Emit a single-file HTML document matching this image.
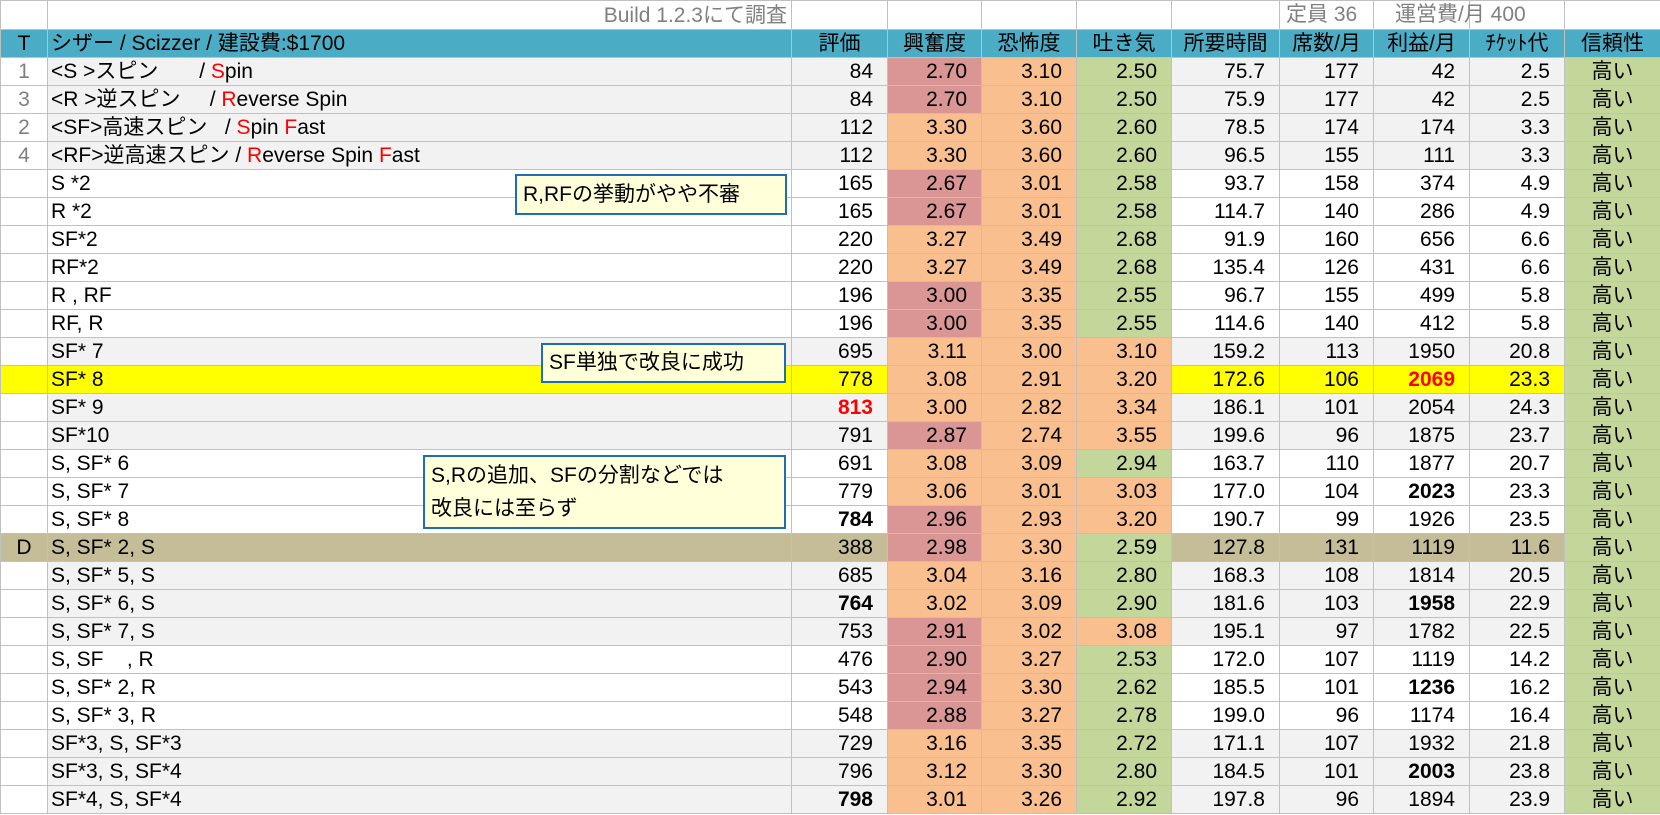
<!DOCTYPE html>
<html><head><meta charset="utf-8">
<style>
html,body{margin:0;padding:0;background:#fff;width:1660px;height:815px;overflow:hidden}
body{font-family:"Liberation Sans Narrow","Liberation Sans","Noto Sans CJK JP",sans-serif;font-size:21px;color:#000;position:relative}
table{border-collapse:collapse;table-layout:fixed;position:absolute;left:0;top:0;width:1660px}
td{border:1px solid #c0c0c0;height:27px;padding:0 14px 0 0;text-align:right;white-space:nowrap;overflow:hidden;line-height:27px;background:#fff}
tr.top td{height:28px;color:#808080}
tr.hd td{background:#4bacc6;text-align:center;padding:0}
td.n{text-align:center;color:#808080;padding:0}
td.nm{text-align:left;padding:0 0 0 3px}
tr.g td{background:#f2f2f2}
tr.g td.n{background:#fff}
tr td.gn{background:#f2f2f2}
tr.y td{background:#ffff00}
tr.d td{background:#c4bd97}
tr.d td.n{color:#000}
tr td.r{background:#da9694}
tr td.o{background:#fabf8f}
tr td.gr{background:#c4d79b}
tr td.h{background:#c4d79b;text-align:center;padding:0}
.red{color:#ff0000}
b{font-weight:bold}
.box{position:absolute;background:#ffffd9;border:2px solid #1f6fb0;font-size:21px;line-height:32px;padding:0 6px;box-sizing:border-box}
.tl{position:absolute;top:0;line-height:29px;color:#808080;white-space:nowrap}
</style></head><body>
<table>
<colgroup><col style="width:47px"><col style="width:744px"><col style="width:96px"><col style="width:94px"><col style="width:95px"><col style="width:95px"><col style="width:108px"><col style="width:94px"><col style="width:96px"><col style="width:95px"><col style="width:96px"></colgroup>
<tr class="top"><td></td><td style="padding-right:4px">Build 1.2.3にて調査</td><td></td><td></td><td></td><td></td><td></td><td></td><td></td><td></td><td></td></tr>
<tr class="hd"><td>T</td><td style="text-align:left;padding-left:3px">シザー / Scizzer / 建設費:$1700</td><td>評価</td><td>興奮度</td><td>恐怖度</td><td>吐き気</td><td>所要時間</td><td>席数/月</td><td>利益/月</td><td>ﾁｹｯﾄ代</td><td>信頼性</td></tr>
<tr class="g"><td class="n gn">1</td><td class="nm">&lt;S &gt;スピン&nbsp;&nbsp;&nbsp;&nbsp;&nbsp;&nbsp;&nbsp;/ <span class="red">S</span>pin</td><td>84</td><td class="r">2.70</td><td class="o">3.10</td><td class="gr">2.50</td><td>75.7</td><td>177</td><td>42</td><td>2.5</td><td class="h">高い</td></tr>
<tr class="g"><td class="n gn">3</td><td class="nm">&lt;R &gt;逆スピン&nbsp;&nbsp;&nbsp;&nbsp;&nbsp;/ <span class="red">R</span>everse Spin</td><td>84</td><td class="r">2.70</td><td class="o">3.10</td><td class="gr">2.50</td><td>75.9</td><td>177</td><td>42</td><td>2.5</td><td class="h">高い</td></tr>
<tr class="g"><td class="n gn">2</td><td class="nm">&lt;SF&gt;高速スピン&nbsp;&nbsp;&nbsp;/ <span class="red">S</span>pin <span class="red">F</span>ast</td><td>112</td><td class="o">3.30</td><td class="o">3.60</td><td class="gr">2.60</td><td>78.5</td><td>174</td><td>174</td><td>3.3</td><td class="h">高い</td></tr>
<tr class="g"><td class="n gn">4</td><td class="nm">&lt;RF&gt;逆高速スピン / <span class="red">R</span>everse Spin <span class="red">F</span>ast</td><td>112</td><td class="o">3.30</td><td class="o">3.60</td><td class="gr">2.60</td><td>96.5</td><td>155</td><td>111</td><td>3.3</td><td class="h">高い</td></tr>
<tr><td class="n"></td><td class="nm">S *2</td><td>165</td><td class="r">2.67</td><td class="o">3.01</td><td class="gr">2.58</td><td>93.7</td><td>158</td><td>374</td><td>4.9</td><td class="h">高い</td></tr>
<tr><td class="n"></td><td class="nm">R *2</td><td>165</td><td class="r">2.67</td><td class="o">3.01</td><td class="gr">2.58</td><td>114.7</td><td>140</td><td>286</td><td>4.9</td><td class="h">高い</td></tr>
<tr><td class="n"></td><td class="nm">SF*2</td><td>220</td><td class="o">3.27</td><td class="o">3.49</td><td class="gr">2.68</td><td>91.9</td><td>160</td><td>656</td><td>6.6</td><td class="h">高い</td></tr>
<tr><td class="n"></td><td class="nm">RF*2</td><td>220</td><td class="o">3.27</td><td class="o">3.49</td><td class="gr">2.68</td><td>135.4</td><td>126</td><td>431</td><td>6.6</td><td class="h">高い</td></tr>
<tr><td class="n"></td><td class="nm">R , RF</td><td>196</td><td class="r">3.00</td><td class="o">3.35</td><td class="gr">2.55</td><td>96.7</td><td>155</td><td>499</td><td>5.8</td><td class="h">高い</td></tr>
<tr><td class="n"></td><td class="nm">RF, R</td><td>196</td><td class="r">3.00</td><td class="o">3.35</td><td class="gr">2.55</td><td>114.6</td><td>140</td><td>412</td><td>5.8</td><td class="h">高い</td></tr>
<tr class="g"><td class="n"></td><td class="nm">SF* 7</td><td>695</td><td class="o">3.11</td><td class="o">3.00</td><td class="o">3.10</td><td>159.2</td><td>113</td><td>1950</td><td>20.8</td><td class="h">高い</td></tr>
<tr class="y"><td class="n"></td><td class="nm">SF* 8</td><td>778</td><td class="o">3.08</td><td class="o">2.91</td><td class="o">3.20</td><td>172.6</td><td>106</td><td><b class="red">2069</b></td><td>23.3</td><td class="h">高い</td></tr>
<tr class="g"><td class="n"></td><td class="nm">SF* 9</td><td><b class="red">813</b></td><td class="o">3.00</td><td class="o">2.82</td><td class="o">3.34</td><td>186.1</td><td>101</td><td>2054</td><td>24.3</td><td class="h">高い</td></tr>
<tr class="g"><td class="n"></td><td class="nm">SF*10</td><td>791</td><td class="r">2.87</td><td class="o">2.74</td><td class="o">3.55</td><td>199.6</td><td>96</td><td>1875</td><td>23.7</td><td class="h">高い</td></tr>
<tr><td class="n"></td><td class="nm">S, SF* 6</td><td>691</td><td class="o">3.08</td><td class="o">3.09</td><td class="gr">2.94</td><td>163.7</td><td>110</td><td>1877</td><td>20.7</td><td class="h">高い</td></tr>
<tr><td class="n"></td><td class="nm">S, SF* 7</td><td>779</td><td class="o">3.06</td><td class="o">3.01</td><td class="o">3.03</td><td>177.0</td><td>104</td><td><b>2023</b></td><td>23.3</td><td class="h">高い</td></tr>
<tr><td class="n"></td><td class="nm">S, SF* 8</td><td><b>784</b></td><td class="r">2.96</td><td class="o">2.93</td><td class="o">3.20</td><td>190.7</td><td>99</td><td>1926</td><td>23.5</td><td class="h">高い</td></tr>
<tr class="d"><td class="n">D</td><td class="nm">S, SF* 2, S</td><td>388</td><td class="r">2.98</td><td class="o">3.30</td><td class="gr">2.59</td><td>127.8</td><td>131</td><td>1119</td><td>11.6</td><td class="h">高い</td></tr>
<tr class="g"><td class="n"></td><td class="nm">S, SF* 5, S</td><td>685</td><td class="o">3.04</td><td class="o">3.16</td><td class="gr">2.80</td><td>168.3</td><td>108</td><td>1814</td><td>20.5</td><td class="h">高い</td></tr>
<tr class="g"><td class="n"></td><td class="nm">S, SF* 6, S</td><td><b>764</b></td><td class="o">3.02</td><td class="o">3.09</td><td class="gr">2.90</td><td>181.6</td><td>103</td><td><b>1958</b></td><td>22.9</td><td class="h">高い</td></tr>
<tr class="g"><td class="n"></td><td class="nm">S, SF* 7, S</td><td>753</td><td class="r">2.91</td><td class="o">3.02</td><td class="o">3.08</td><td>195.1</td><td>97</td><td>1782</td><td>22.5</td><td class="h">高い</td></tr>
<tr><td class="n"></td><td class="nm">S, SF&nbsp;&nbsp;&nbsp;&nbsp;, R</td><td>476</td><td class="r">2.90</td><td class="o">3.27</td><td class="gr">2.53</td><td>172.0</td><td>107</td><td>1119</td><td>14.2</td><td class="h">高い</td></tr>
<tr><td class="n"></td><td class="nm">S, SF* 2, R</td><td>543</td><td class="r">2.94</td><td class="o">3.30</td><td class="gr">2.62</td><td>185.5</td><td>101</td><td><b>1236</b></td><td>16.2</td><td class="h">高い</td></tr>
<tr><td class="n"></td><td class="nm">S, SF* 3, R</td><td>548</td><td class="r">2.88</td><td class="o">3.27</td><td class="gr">2.78</td><td>199.0</td><td>96</td><td>1174</td><td>16.4</td><td class="h">高い</td></tr>
<tr class="g"><td class="n"></td><td class="nm">SF*3, S, SF*3</td><td>729</td><td class="o">3.16</td><td class="o">3.35</td><td class="gr">2.72</td><td>171.1</td><td>107</td><td>1932</td><td>21.8</td><td class="h">高い</td></tr>
<tr class="g"><td class="n"></td><td class="nm">SF*3, S, SF*4</td><td>796</td><td class="o">3.12</td><td class="o">3.30</td><td class="gr">2.80</td><td>184.5</td><td>101</td><td><b>2003</b></td><td>23.8</td><td class="h">高い</td></tr>
<tr class="g"><td class="n"></td><td class="nm">SF*4, S, SF*4</td><td><b>798</b></td><td class="o">3.01</td><td class="o">3.26</td><td class="gr">2.92</td><td>197.8</td><td>96</td><td>1894</td><td>23.9</td><td class="h">高い</td></tr>
</table>
<span class="tl" style="left:1286px">定員 36</span>
<span class="tl" style="left:1395px">運営費/月 400</span>
<div class="box" style="left:515px;top:174px;width:272px;height:41px;line-height:37px">R,RFの挙動がやや不審</div>
<div class="box" style="left:541px;top:343px;width:245px;height:40px;line-height:36px">SF単独で改良に成功</div>
<div class="box" style="left:423px;top:455px;width:363px;height:74px;line-height:33px;padding-top:2px">S,Rの追加、SFの分割などでは<br>改良には至らず</div>
</body></html>
